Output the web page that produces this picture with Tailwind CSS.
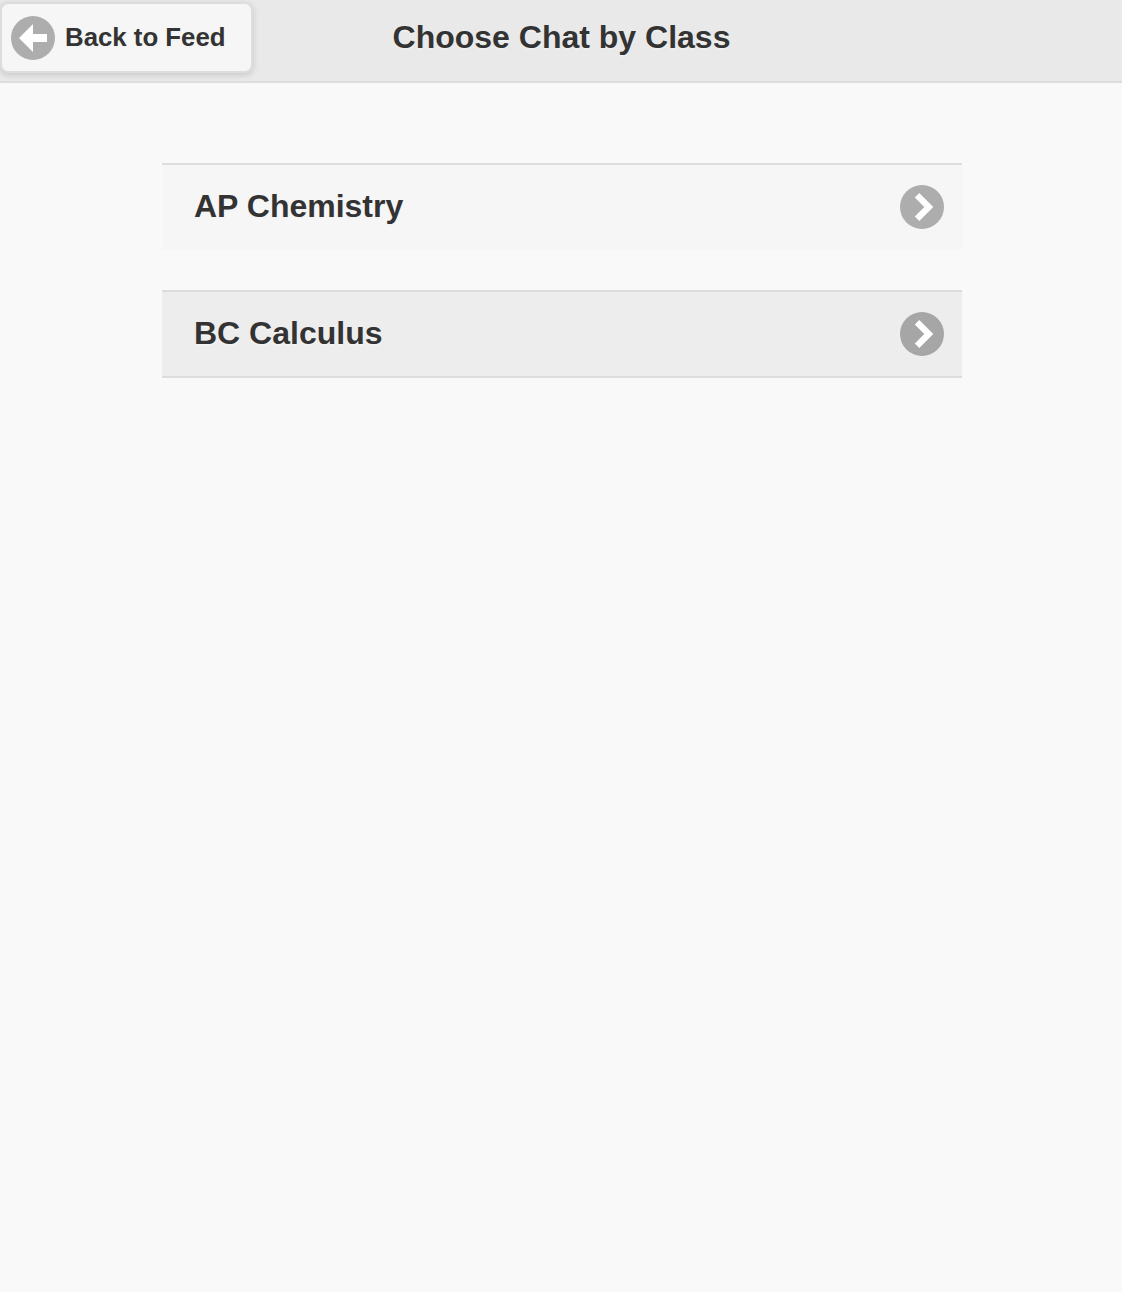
<!DOCTYPE html>
<html lang="en">
<head>
<meta charset="utf-8">
<title>Choose Chat by Class</title>
<script src="https://cdn.jsdelivr.net/npm/@tailwindcss/browser@4"></script>
</head>
<body class="min-h-screen bg-[#f9f9f9] font-['Liberation_Sans',Arial,sans-serif] font-bold text-[#333]">
<header class="grid h-[83px] grid-cols-[1fr_auto_1fr] items-start border-b-2 border-[#ddd] bg-[#e9e9e9] pt-0.5">
  <a href="#" class="flex h-[71px] w-[253px] items-center gap-2.5 rounded-[8px] border-2 border-[#ddd] bg-[#f6f6f6] pl-[9px] text-[25.8px] whitespace-nowrap shadow-[0_2px_6px_rgba(0,0,0,0.15)] [text-shadow:0_2px_0_#f3f3f3]">
    <svg class="size-11 shrink-0" viewBox="0 0 44 44"><circle cx="22" cy="22" r="22" fill="#adadad"/><path d="M22 18V8L8 22l14 14V26h14v-8z" fill="#fff"/></svg>
    <span class="-mt-px">Back to Feed</span>
  </a>
  <h1 class="pt-[14px] pl-px text-[32px] leading-[42px] whitespace-nowrap [text-shadow:0_2px_0_#eee]">Choose Chat by Class</h1>
</header>
<main class="ml-[162px] flex w-[800px] flex-col gap-10 pt-20">
  <a href="#" class="flex h-[87px] items-center justify-between border-t-2 border-[#ddd] bg-[#f6f6f6] pr-[18px] pb-px pl-8 text-[32px] [text-shadow:0_2px_0_#f3f3f3]">
    <span class="-mt-0.5">AP Chemistry</span>
    <svg class="size-11" viewBox="0 0 44 44"><circle cx="22" cy="22" r="22" fill="#adadad"/><path d="M14.8 12.5l4.5-4.5 14 14-14 14-4.5-4.5 9.5-9.5z" fill="#fff"/></svg>
  </a>
  <a href="#" class="flex h-[88px] items-center justify-between border-y-2 border-[#ddd] bg-[#ededed] pr-[18px] pl-8 text-[32px] [text-shadow:0_2px_0_#f3f3f3]">
    <span class="-mt-0.5">BC Calculus</span>
    <svg class="size-11" viewBox="0 0 44 44"><circle cx="22" cy="22" r="22" fill="#a6a6a6"/><path d="M14.8 12.5l4.5-4.5 14 14-14 14-4.5-4.5 9.5-9.5z" fill="#fff"/></svg>
  </a>
</main>
</body>
</html>
